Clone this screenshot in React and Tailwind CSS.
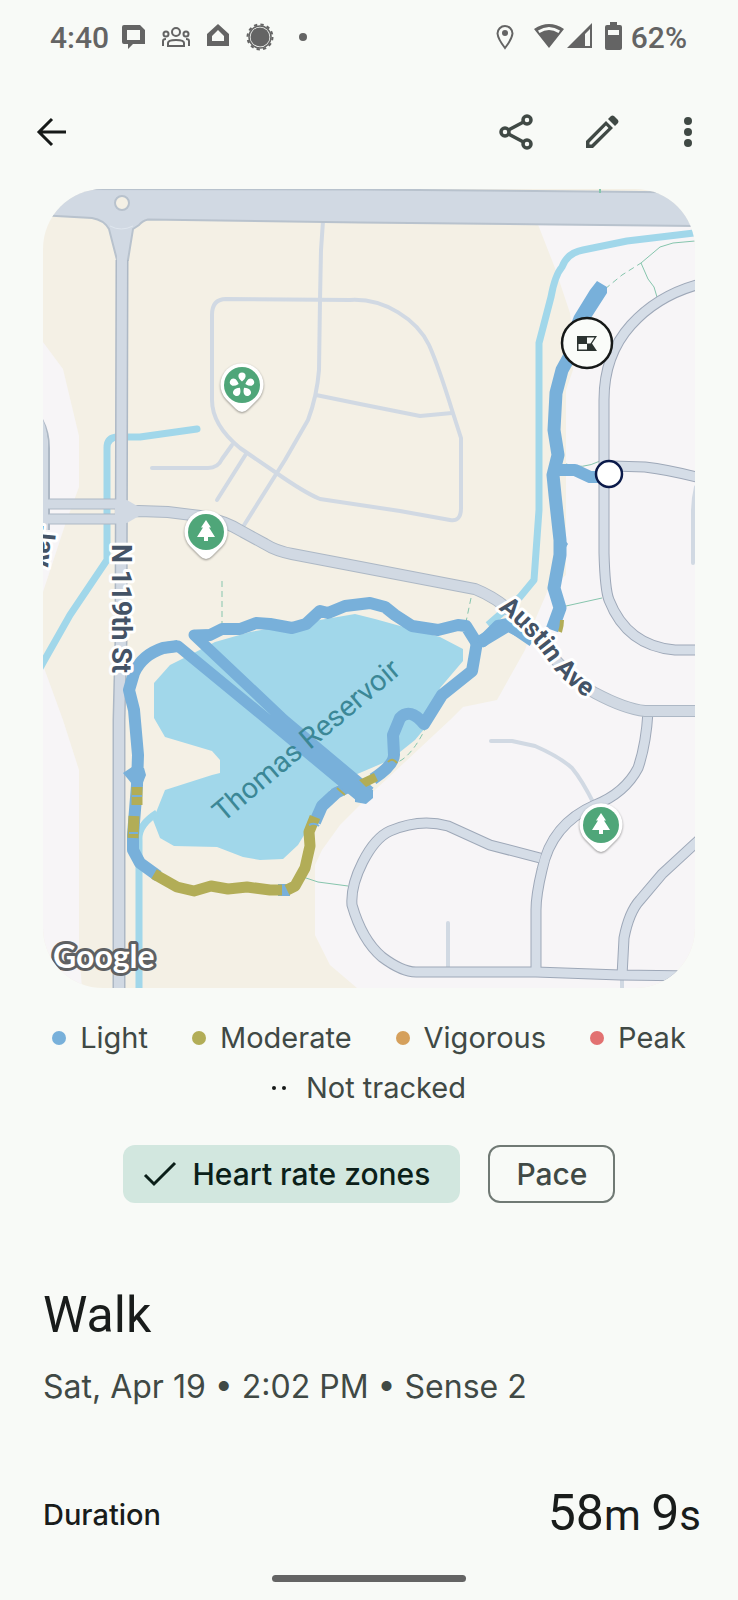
import clsx from 'clsx';

const legend = [
  { label: 'Light', dot: 'bg-[#78b0da]' },
  { label: 'Moderate', dot: 'bg-[#b2ad57]' },
  { label: 'Vigorous', dot: 'bg-[#d5a05c]' },
  { label: 'Peak', dot: 'bg-[#e27171]' },
];

const casedRoads = [
  { d: 'M43 504H121M43 519H121', width: 11 },
  { d: 'M122 512L139 511L168 512L200 516Q226 521 243 532L265 544Q276 551 292 554L360 567L475 589Q500 599 520 620L545 648Q575 683 595 693Q625 709 645 711L700 711', width: 12 },
];

const eastRoads = [
  'M700 284Q658 295 631 325Q604 355 604 400L604 553Q605 590 609 600Q627 646 675 650L700 650',
  'M612 466L645 467Q670 470 700 478',
  'M648 712Q646 745 638 768Q625 793 595 805C565 818 548 840 542 870Q536 895 536 910L536 974',
  'M540 858L490 845L448 826Q420 818 390 831C370 840 350 880 352 905Q362 940 382 957Q402 972 416 972L536 972L620 975L700 976',
  'M622 976L624 938Q629 912 640 900L662 874L700 839',
];

const innerRoads = [
  'M323 221L321 250L320 300L319 370Q317 396 308 420L285 460L241 530',
  'M226 299L350 300C385 298 417 320 429 345Q438 365 452 410L461 438V508Q461 522 450 520L400 511L320 499Q305 493 275 472L240 448Q212 425 212 400V315Q212 299 226 299Z',
  'M316 395L360 404L420 416L452 413',
  'M152 468H208Q218 468 222 459L232 445',
  'M217 500L246 454',
];

const lilacRoads = [
  'M491 741L512 741L535 746Q560 757 572 768Q582 780 594 804',
  'M448 923V972',
  'M622 978V990',
  'M696 487Q693 500 693 512V563',
];

const trails = [
  'M695 241L673 243L660 247L641 263L648 279L654 287L657 297',
  'M566 606L602 598',
  'M566 464Q582 470 600 461',
  'M303 877L318 882L348 886',
];

const dashedTrails = [
  'M605 289L622 275L641 263',
  'M222 581V626',
  'M471 598L466 622L473 640',
  'M427 725Q413 755 398 762',
];

const routeBlue = [
  'M533 641L508 624L498 626L483 641L476 642L466 626L458 625L438 630L412 626L395 615L385 607L370 603L345 606L328 613L320 611L306 624L292 628L270 624L256 623L240 629L222 629L210 635L196 636',
  'M178 646L163 648Q142 655 134 673L129 690L134 710L138 755L137 785L133 835L133 850L140 863L158 876',
  'M348 787L336 793L322 806L315 822',
  'M373 779Q394 765 394 755L393 735L400 718Q410 707 424 724L442 695L472 671L477 642',
  'M558 470L575 470L590 477L608 477',
  'M278 890L290 890',
];

// the straight cut across the water, walked there and back
const routeCrossing = 'M163 648L178 646L268 720L362 798M210 635L194 635L284 720L370 792';

const routeOlive = [
  'M137 787L137 805M134 816L133 838',
  'M154 874L177 887L194 891L211 886L228 889L247 887L270 890L282 890',
  'M287 890L295 886L305 868L310 846L309 832L315 817',
];

function ParkPin({ x, y, flower }) {
  return (
    <g transform={`translate(${x} ${y})`}>
      <path
        d="M0 27Q-3 27 -6 24L-16 14A21.500 21.500 0 1 1 16 14L6 24Q3 27 0 27Z"
        className="fill-white drop-shadow-[0_1px_1px_rgba(0,0,0,0.4)]"
      />
      <circle r="18" className="fill-[#4fa679]" />
      {flower ? (
        <g className="fill-white">
          {[0, 72, 144, 216, 288].map((a) => (
            <path key={a} transform={`rotate(${a})`} d="M0 -3.500Q-3.600 -6.500 -3.600 -9A3.600 3.600 0 0 1 3.600 -9Q3.600 -6.500 0 -3.500Z" />
          ))}
        </g>
      ) : (
        <path d="M0 -12L5 -4.500H3L9 5H2V9H-2V5H-9L-3 -4.500H-5Z" className="fill-white" />
      )}
    </g>
  );
}

function RouteMap() {
  return (
    <svg viewBox="43 189 652 799" role="img" aria-label="Route map" className="block w-full rounded-[60px] bg-[#f4f0e5]">
      {/* residential land */}
      <g className="fill-[#f7f5f7]">
        <path d="M43 342L63 369L79 436V487L65 525L43 592Z" />
        <path d="M43 665L63 720L79 770V950L82 988H43Z" />
        <path d="M537 222L555 268L570 313L574 345L573 370L566 390V575L548 590L535 620L525 650L497 700L463 707L450 720L375 790L340 825L322 850L315 865V935L330 965L357 988H695V222Z" />
      </g>

      {/* water */}
      <path
        d="M154 683L170 665L190 655L215 642L250 632L355 614L375 619L440 637L463 649V661L440 688L430 722L415 740L390 760L355 775L330 790L318 812L298 845L283 859L260 860L243 857L217 847L174 846L160 838L153 820L165 790L212 775L220 773V760L212 751L165 737L154 718Z"
        className="fill-[#a1d7ea]"
      />
      <g className="fill-none stroke-[#a1d7ea] stroke-[7]" strokeLinejoin="round">
        <path d="M197 429L140 437H118Q107 437 107 448V560L70 615L40 668" strokeLinecap="round" />
        <path d="M139 990V840Q138 825 157 813" />
        <path d="M694 233L627 241L583 250Q567 253 562 267Q555 275 551 297L539 343V510L534 580L520 597L488 625" />
      </g>

      <g className="fill-none stroke-[#86c5ad] stroke-1">
        {trails.map((d) => <path key={d} d={d} />)}
        {dashedTrails.map((d) => <path key={d} d={d} strokeDasharray="6 4" />)}
      </g>

      {/* roads */}
      <g className="fill-none stroke-[#d1d9e3] stroke-[4]" strokeLinecap="round" strokeLinejoin="round">
        {innerRoads.map((d) => <path key={d} d={d} />)}
        {lilacRoads.map((d) => <path key={d} d={d} />)}
      </g>
      <g className="fill-none stroke-[#9ea8b8]" strokeWidth="11">
        {eastRoads.map((d) => <path key={d} d={d} />)}
      </g>
      <g className="fill-none stroke-[#d5dde7]" strokeWidth="9">
        {eastRoads.map((d) => <path key={d} d={d} />)}
      </g>
      <path
        d="M40 189L360 189.500L700 192.500V226L360 222.500L148 219.500Q142 221 139 225L133 229L128 260H117L109 229Q104 220 92 218L40 215Z"
        className="fill-[#d1d9e3] stroke-[#b8c2cd] stroke-[2]"
      />
      <g className="fill-none stroke-[#adb8c5]">
        {casedRoads.map((r) => <path key={r.d} d={r.d} strokeWidth={r.width} />)}
        <path d="M122 260L121 640L119 720V990" strokeWidth="13" />
        <path d="M40 416Q49 430 49 448V530" strokeWidth="2" />
      </g>
      <path d="M43 420Q48 432 48 448V530H43Z" className="fill-[#d1d9e3]" />
      <g className="fill-none stroke-[#d1d9e3]">
        {casedRoads.map((r) => <path key={r.d} d={r.d} strokeWidth={r.width - 2} />)}
        <path d="M122 252L121 640L119 720V990" strokeWidth="10" />
      </g>
      <path d="M127 500L139 507V516L127 523L115 521V502Z" className="fill-[#d1d9e3]" />
      <path d="M110 226Q121 232 133 226" className="fill-none stroke-[#dfe6ee] stroke-1" />
      <circle cx="122" cy="203" r="7" className="fill-[#f4f0e5] stroke-[#b8c2cd] stroke-[2]" />
      <path d="M600 189V193" className="stroke-[#86c5ad] stroke-[2]" />

      {/* walked route, coloured by heart rate zone */}
      <g className="fill-none stroke-[#78b0da] stroke-[12]" strokeLinejoin="round">
        {routeBlue.map((d) => <path key={d} d={d} />)}
      </g>
      <path
        d="M573 350L562 370L556 393L554 430L558 455L553 475L555 495L560 540L560 555L554 588L560 608L552 630M532 637L508 625L480 642"
        className="fill-none stroke-[#78b0da] stroke-[13]"
        strokeLinejoin="round"
      />
      <path d="M597 281L607 287V293L589 321L577 345L565 340L574 316L590 290Z" className="fill-[#78b0da]" />
      <path d="M123 773L132 767L144 768L146 775L142 785L132 784Z" className="fill-[#78b0da]" />
      <path d="M561 535L568 544L562 554Z" className="fill-[#78b0da]" />
      <g className="fill-none stroke-[#b2ad57] stroke-[11]" strokeLinejoin="round">
        {routeOlive.map((d) => <path key={d} d={d} />)}
      </g>
      <g className="fill-none stroke-[#b2ad57] stroke-[2]">
        <path d="M337 788L345 795M342 786L349 792" />
        <path d="M388 762Q392 757 397 763" />
        <path d="M560 632Q562 626 562 620" strokeWidth="4" />
      </g>
      <path d={routeCrossing} className="fill-none stroke-[#78b0da] stroke-[11]" strokeLinejoin="round" />
      <path d="M355 780L373 790V798L366 804L355 802Z" className="fill-[#78b0da]" />
      <path d="M359 780L374 773L378 781L366 787Z" className="fill-[#b2ad57]" />
      <path d="M309 825Q315 822 319 826M132 796H142M129 833H138" className="fill-none stroke-[#78b0da] stroke-[2]" />

      {/* labels */}
      <g className="fill-[#445366] stroke-white font-[Roboto,sans-serif] text-[26px] font-bold [paint-order:stroke] stroke-[6]" strokeLinejoin="round">
        <text transform="translate(112 544) rotate(90)" className="text-[27px]">N 119th St</text>
        <text transform="translate(38 525) rotate(95)">Jay</text>
        <path id="austin" d="M498 609C520 625 538 645 551 665C560 678 575 690 600 708" fill="none" stroke="none" />
        <text><textPath href="#austin">Austin Ave</textPath></text>
      </g>
      <text transform="translate(223 823) rotate(-40)" className="fill-[#3b8796] font-[Roboto,sans-serif] text-[29px]">
        Thomas Reservoir
      </text>
      <text x="53" y="968" className="fill-white stroke-[#5f6163] font-[Lato,sans-serif] text-[32px] font-bold [paint-order:stroke] stroke-[6]" strokeLinejoin="round">
        Google
      </text>

      {/* markers */}
      <ParkPin x={242} y={385} flower />
      <ParkPin x={206} y={532} />
      <ParkPin x={601} y={825} />
      <circle cx="609" cy="474" r="13" className="fill-white stroke-[#0b1a4a]" strokeWidth="2.500" />
      <circle cx="587" cy="343" r="25" className="fill-[#fafcf9] stroke-[#161918]" strokeWidth="2.500" />
      <path d="M577 336H597L592 343.500L597 351H577ZM578.500 344V349.500H587V344ZM587 337.500V343.500H590.500L594.500 337.500Z" fillRule="evenodd" className="fill-[#2b3330]" />
    </svg>
  );
}

function StatusBar() {
  return (
    <div className="flex h-[74px] items-center pl-[50px] pr-[51px] font-[Roboto,sans-serif] text-[30px] font-medium text-[#646464]">
      <span>4:40</span>
      <svg viewBox="0 0 200 30" className="ml-3 h-[30px] w-[200px] fill-[#646464]" aria-hidden="true">
        <path fillRule="evenodd" d="M3 3H19L24 8V22H12L7 27V22H3Q1 22 1 20V5Q1 3 3 3ZM6 8V18H19V8Z" />
        <g className="fill-none stroke-[#646464] stroke-[2]">
          <circle cx="55" cy="10" r="4" />
          <circle cx="45" cy="12" r="2.500" />
          <circle cx="65" cy="12" r="2.500" />
          <path d="M47 24V21Q47 18 55 18Q63 18 63 21V24ZM42 24V19Q42 17 45 17M68 24V19Q68 17 65 17" />
        </g>
        <path fillRule="evenodd" d="M97 2L108 12V24H86V12ZM97 8L91 14V19H103V14Z" />
        <circle cx="139" cy="15" r="9.500" />
        <circle cx="139" cy="15" r="11" className="fill-none stroke-[#646464]" strokeWidth="1.500" />
        <circle cx="139" cy="15" r="12.500" className="fill-none stroke-[#646464] stroke-[2]" strokeDasharray="3.300 3.250" />
        <circle cx="182" cy="15" r="4" />
      </svg>
      <svg viewBox="0 0 128 30" className="ml-auto mr-2 h-[30px] w-32 fill-[#646464]" aria-hidden="true">
        <path d="M10 4A7.500 7.500 0 0 1 17.500 11.500Q17 17 10 26Q3 17 2.500 11.500A7.500 7.500 0 0 1 10 4Z" className="fill-none stroke-[#646464] stroke-[2]" />
        <circle cx="10" cy="11" r="3" />
        <path fillRule="evenodd" d="M39 7Q54 -3 69 7L54 26ZM43 8.500L44.500 11Q54 5 63.500 11L65 8.500Q54 1.500 43 8.500Z" />
        <path fillRule="evenodd" d="M72 26L97 1V26ZM90 12V24H95V7Z" />
        <path fillRule="evenodd" d="M115 0H122V3H125Q127 3 127 5V26Q127 28 125 28H112Q110 28 110 26V5Q110 3 112 3H115ZM113 8V13H124V8Z" />
      </svg>
      <span>62%</span>
    </div>
  );
}

function TopBar() {
  return (
    <header className="flex h-[115px] items-center pl-[34px] pr-8 text-[#404945]">
      <button type="button" aria-label="Back" className="text-[#161918]">
        <svg viewBox="0 0 36 36" className="size-9 fill-none stroke-current stroke-[3]">
          <path d="M32 18H5M18 5L5 18L18 31" />
        </svg>
      </button>
      <button type="button" aria-label="Share" className="ml-auto">
        <svg viewBox="0 0 36 36" className="size-9 fill-none stroke-current" strokeWidth="3.500">
          <circle cx="7" cy="18" r="4" />
          <circle cx="29" cy="6" r="4" />
          <circle cx="29" cy="30" r="4" />
          <path d="M10.500 16L25.500 8M10.500 20L25.500 28" />
        </svg>
      </button>
      <button type="button" aria-label="Edit" className="ml-[50px]">
        <svg viewBox="0 0 36 36" className="size-9 fill-current">
          <path fillRule="evenodd" d="M2 34V27L22 7L29 14L9 34ZM5.500 28.500V30.500H7.500L24.500 14L22 11.500Z" />
          <path d="M24 5L27 2Q28.500 1 30 2L34 6Q35 7.500 34 9L31 12Z" />
        </svg>
      </button>
      <button type="button" aria-label="More options" className="ml-[50px]">
        <svg viewBox="0 0 36 36" className="size-9 fill-current">
          <circle cx="18" cy="7" r="4" />
          <circle cx="18" cy="18" r="4" />
          <circle cx="18" cy="29" r="4" />
        </svg>
      </button>
    </header>
  );
}

function Chip({ selected, children }) {
  return (
    <button
      type="button"
      aria-pressed={!!selected}
      className={clsx(
        'flex h-[58px] items-center gap-4 rounded-xl text-[30px] font-medium',
        selected ? 'bg-[#d2e7df] pl-5 pr-[30px] text-[#0b1f19]' : 'border-2 border-[#707974] px-[26px] text-[#404945]'
      )}
    >
      {selected && (
        <svg viewBox="0 0 34 34" className="size-[34px] fill-none stroke-current stroke-[3]" aria-hidden="true">
          <path d="M2 18L11 27L32 6" />
        </svg>
      )}
      {children}
    </button>
  );
}

export default function App() {
  return (
    <div className="flex min-h-screen flex-col bg-[#f8faf7] font-[Inter,sans-serif] text-[#191c1b]">
      <StatusBar />
      <TopBar />

      <main className="flex flex-1 flex-col">
        <div className="px-[43px]">
          <RouteMap />
        </div>

        <ul className="mt-[25px] flex flex-wrap justify-center gap-x-11 px-10 text-[29px] leading-[50px] text-[#404945]">
          {legend.map((item) => (
            <li key={item.label} className="flex items-center gap-3.5">
              <span className={clsx('size-3.5 rounded-full', item.dot)} />
              {item.label}
            </li>
          ))}
          <li className="flex items-center gap-5">
            <span className="flex gap-1.5">
              <span className="size-1 rounded-full bg-[#161918]" />
              <span className="size-1 rounded-full bg-[#161918]" />
            </span>
            Not tracked
          </li>
        </ul>

        <div className="mt-8 flex justify-center gap-7">
          <Chip selected>Heart rate zones</Chip>
          <Chip>Pace</Chip>
        </div>

        <section className="mt-20 px-[43px]">
          <h1 className="font-[Roboto,sans-serif] text-[50px] leading-[64px]">Walk</h1>
          <p className="mt-4 text-[32px] leading-[48px] text-[#404945]">Sat, Apr 19 • 2:02 PM • Sense 2</p>
        </section>

        <dl className="mt-[70px] flex items-center justify-between pl-[43px] pr-[37px]">
          <dt className="text-[29px] font-medium">Duration</dt>
          <dd className="font-[Roboto,sans-serif] text-[50px] leading-[64px]">
            58<span className="text-[42px]">m </span>9<span className="text-[42px]">s</span>
          </dd>
        </dl>
      </main>

      <div className="mx-auto mb-[18px] h-[7px] w-[194px] rounded-full bg-[#646464]" />
    </div>
  );
}
